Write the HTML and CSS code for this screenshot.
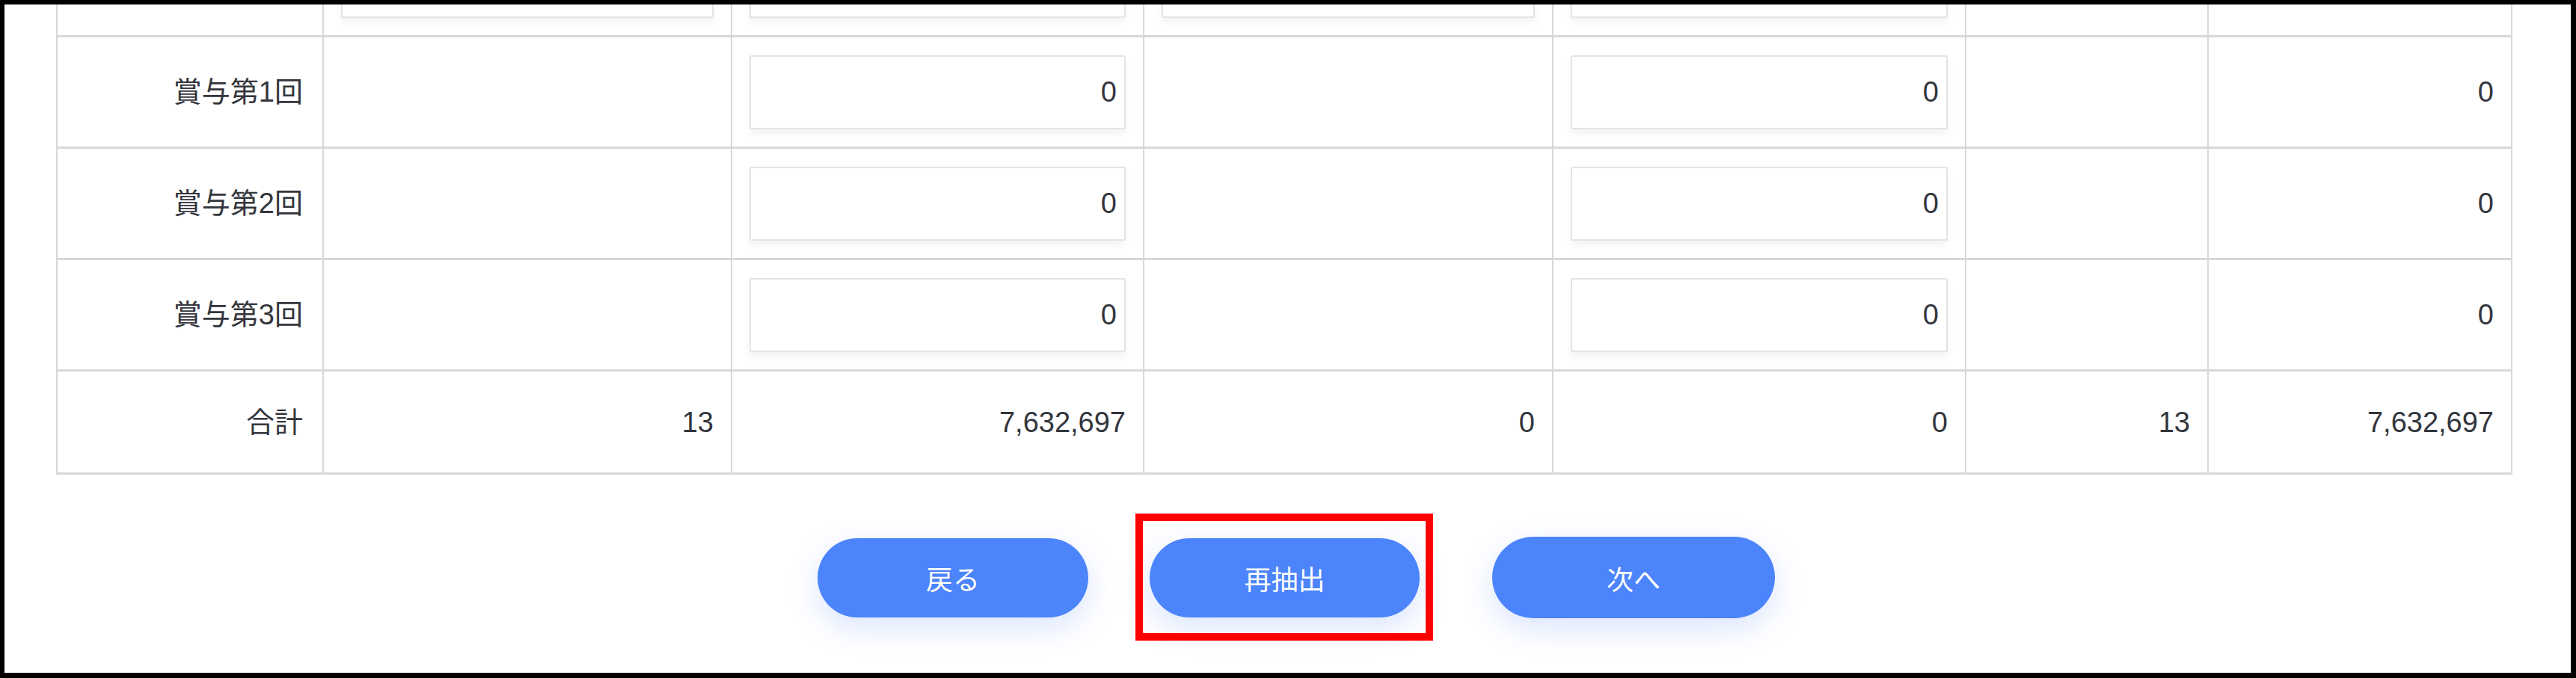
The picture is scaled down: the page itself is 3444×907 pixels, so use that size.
FILE: index.html
```html
<!DOCTYPE html>
<html lang="ja">
<head>
<meta charset="utf-8">
<title>賞与</title>
<link rel="stylesheet" href="styles.css">
</head>
<body>
<div class="frame">
  <div class="sheet">
    <div class="grid">
      <div class="row">
        <div class="cell label"></div>
        <div class="cell"><input class="field" type="text" value="" readonly></div>
        <div class="cell"><input class="field" type="text" value="" readonly></div>
        <div class="cell"><input class="field" type="text" value="" readonly></div>
        <div class="cell"><input class="field" type="text" value="" readonly></div>
        <div class="cell"></div>
        <div class="cell"></div>
      </div>
      <div class="row">
        <div class="cell label">賞与第1回</div>
        <div class="cell"></div>
        <div class="cell"><input class="field" type="text" value="0" readonly></div>
        <div class="cell"></div>
        <div class="cell"><input class="field" type="text" value="0" readonly></div>
        <div class="cell"></div>
        <div class="cell">0</div>
      </div>
      <div class="row">
        <div class="cell label">賞与第2回</div>
        <div class="cell"></div>
        <div class="cell"><input class="field" type="text" value="0" readonly></div>
        <div class="cell"></div>
        <div class="cell"><input class="field" type="text" value="0" readonly></div>
        <div class="cell"></div>
        <div class="cell">0</div>
      </div>
      <div class="row">
        <div class="cell label">賞与第3回</div>
        <div class="cell"></div>
        <div class="cell"><input class="field" type="text" value="0" readonly></div>
        <div class="cell"></div>
        <div class="cell"><input class="field" type="text" value="0" readonly></div>
        <div class="cell"></div>
        <div class="cell">0</div>
      </div>
      <div class="row total">
        <div class="cell label">合計</div>
        <div class="cell">13</div>
        <div class="cell">7,632,697</div>
        <div class="cell">0</div>
        <div class="cell">0</div>
        <div class="cell">13</div>
        <div class="cell">7,632,697</div>
      </div>
    </div>
    <div class="actions">
      <button class="btn btn-back" type="button">戻る</button>
      <span class="marked"><button class="btn btn-redo" type="button">再抽出</button></span>
      <button class="btn btn-next" type="button">次へ</button>
    </div>
  </div>
</div>
</body>
</html>
```
FILE: styles.css
```css
html, body {
  margin: 0;
  padding: 0;
  background: #ffffff;
}

.frame {
  box-sizing: border-box;
  width: 3444px;
  height: 907px;
  border-style: solid;
  border-color: #000000;
  border-width: 6px 7px 7px 6px;
  overflow: hidden;
  background: #ffffff;
  padding-left: 69px;
  font-family: "Liberation Sans", "Noto Sans CJK JP", sans-serif;
  color: #33363d;
}

.grid {
  width: 3284px;
  margin-top: -105px;
  border-left: 2px solid #d8d8d8;
  box-sizing: border-box;
}

.row {
  display: grid;
  grid-template-columns: 356px 546px 551px 547px 552px 324px 406px;
  height: 149px;
  box-sizing: border-box;
  border-bottom: 3px solid #d8d8d8;
}

.row.total {
  height: 138px;
}

.cell {
  display: flex;
  align-items: center;
  justify-content: flex-end;
  box-sizing: border-box;
  padding: 0 23px;
  border-right: 2px solid #d8d8d8;
  font-size: 38px;
  line-height: 1;
  white-space: nowrap;
}

.cell.label {
  padding-right: 26px;
}

.field {
  box-sizing: border-box;
  width: 100%;
  height: 99px;
  margin: 0;
  padding: 0 10px;
  border: 2px solid #e4e4e4;
  border-radius: 2px;
  background: #ffffff;
  box-shadow: 0 6px 10px rgba(0, 0, 0, 0.05);
  text-align: right;
  font-family: "Liberation Sans", "Noto Sans CJK JP", sans-serif;
  font-size: 38px;
  color: #33363d;
  outline: none;
}

.actions {
  display: flex;
  justify-content: center;
  align-items: center;
  box-sizing: border-box;
  width: 3284px;
  padding-left: 32px;
  margin-top: 83px;
}

.btn {
  box-sizing: border-box;
  width: 362px;
  height: 106px;
  border: none;
  border-radius: 60px;
  background: #4c84fc;
  color: #ffffff;
  font-family: "Noto Sans CJK JP", sans-serif;
  font-size: 36px;
  line-height: 1;
  padding: 0;
  box-shadow: 0 14px 40px rgba(70, 120, 245, 0.2);
  cursor: pointer;
}

.btn-back {
  margin-right: 82px;
}

.btn-redo {
  width: 361px;
  display: block;
}

.btn-next {
  width: 378px;
  height: 109px;
  margin-left: 97px;
}

.marked {
  position: relative;
  display: block;
}

.marked::after {
  content: "";
  position: absolute;
  left: -19px;
  right: -18px;
  top: -33px;
  bottom: -31px;
  border: 10px solid #ff0000;
  pointer-events: none;
}
```
